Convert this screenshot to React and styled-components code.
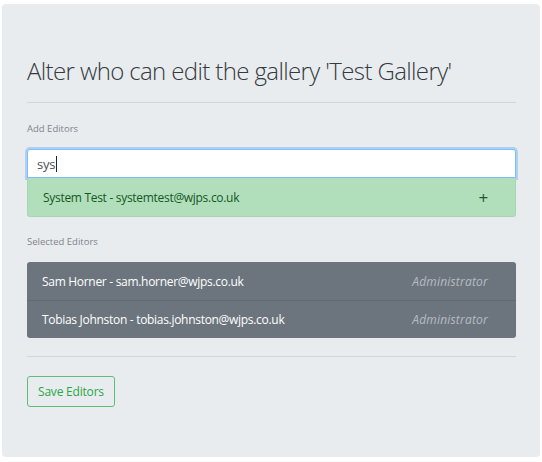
import React from "react";
import styled, { createGlobalStyle } from "styled-components";

const GlobalStyle = createGlobalStyle`
  body {
    margin: 0;
    background: #ffffff;
    font-family: "Open Sans", "Noto Sans", "Liberation Sans", sans-serif;
    color: #212529;
  }
`;

const Page = styled.div`
  padding: 4px 2px 7px 2px;
`;

const Jumbotron = styled.div`
  background-color: #e9ecef;
  border-radius: 4px;
  padding: 50px 24px 50px 25px;
`;

const Title = styled.h1`
  margin: 0;
  font-size: 24px;
  font-weight: 300;
  line-height: 34px;
  color: #343a40;
  letter-spacing: -0.62px;
`;

const Rule = styled.hr`
  border: 0;
  border-top: 1px solid #d3d6d9;
  margin: ${(p) => p.$top}px 0 ${(p) => p.$bottom}px 0;
`;

const Label = styled.div`
  font-size: 9.5px;
  line-height: 14px;
  color: #7d858c;
  margin-bottom: ${(p) => p.$gap}px;
`;

const SearchBox = styled.div`
  height: 27px;
  display: flex;
  align-items: center;
  padding: 0 9px;
  background: #fff;
  border: 1px solid #80bdff;
  border-radius: 3px 3px 0 0;
  box-shadow: 0 0 0 2px rgba(0, 123, 255, 0.25);
  font-size: 13px;
  color: #495057;
  letter-spacing: -0.2px;
`;

const Caret = styled.span`
  display: inline-block;
  width: 1px;
  height: 16px;
  background: #212529;
  margin-left: 1px;
`;

const Suggestion = styled.div`
  display: flex;
  align-items: center;
  justify-content: space-between;
  height: 38px;
  padding: 0 27px 0 15px;
  background: #b1dfbb;
  border: 1px solid #a7d6b2;
  border-top: 0;
  border-radius: 0 0 3px 3px;
  color: #155724;
  font-size: 12px;
  letter-spacing: -0.3px;
  margin-bottom: 18px;
`;

const Plus = styled.span`
  font-size: 17px;
  font-weight: 400;
  color: #1e5a2c;
`;

const EditorList = styled.div`
  background: #6c757d;
  border-radius: 3px;
  overflow: hidden;
`;

const EditorRow = styled.div`
  display: flex;
  align-items: center;
  justify-content: space-between;
  height: 38px;
  padding: 0 28px 0 15px;
  color: #ffffff;
  font-size: 12px;
  letter-spacing: -0.3px;
  & + & {
    border-top: 1px solid #626a72;
    height: 37px;
  }
`;

const Role = styled.span`
  font-style: italic;
  color: #b6bcc2;
  letter-spacing: 0.2px;
`;

const SaveButton = styled.button`
  display: block;
  height: 31px;
  padding: 0 10px;
  background: transparent;
  border: 1px solid #5cbf74;
  border-radius: 3px;
  color: #28a745;
  font-family: inherit;
  font-size: 12px;
  letter-spacing: -0.2px;
  cursor: pointer;
`;

const editors = [
  { name: "Sam Horner", email: "sam.horner@wjps.co.uk", role: "Administrator" },
  { name: "Tobias Johnston", email: "tobias.johnston@wjps.co.uk", role: "Administrator" },
];

export default function App() {
  return (
    <Page>
      <GlobalStyle />
      <Jumbotron>
        <Title>Alter who can edit the gallery 'Test Gallery'</Title>
        <Rule $top={14} $bottom={19} />
        <Label $gap={13}>Add Editors</Label>
        <SearchBox>
          sys
          <Caret />
        </SearchBox>
        <Suggestion>
          <span>System Test - systemtest@wjps.co.uk</span>
          <Plus>+</Plus>
        </Suggestion>
        <Label $gap={13}>Selected Editors</Label>
        <EditorList>
          {editors.map((e) => (
            <EditorRow key={e.email}>
              <span>
                {e.name} - {e.email}
              </span>
              <Role>{e.role}</Role>
            </EditorRow>
          ))}
        </EditorList>
        <Rule $top={18} $bottom={19} />
        <SaveButton>Save Editors</SaveButton>
      </Jumbotron>
    </Page>
  );
}
